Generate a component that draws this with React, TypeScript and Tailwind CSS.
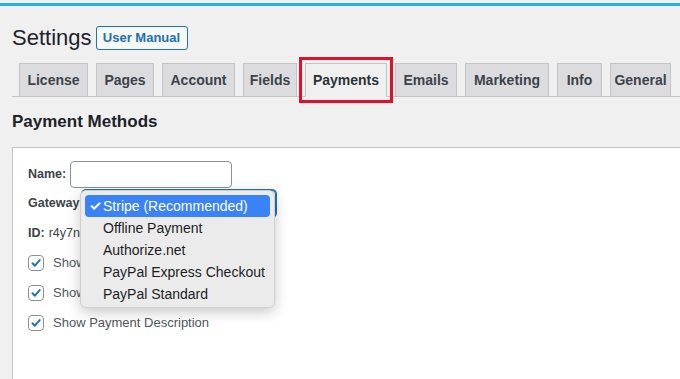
import React from 'react';

const tabs = [
    { label: 'License', w: 'w-[69px]' },
    { label: 'Pages', w: 'w-[58px]' },
    { label: 'Account', w: 'w-[73px]' },
    { label: 'Fields', w: 'w-[54px]' },
    { label: 'Payments', w: 'w-[82px]', active: true },
    { label: 'Emails', w: 'w-[62px]' },
    { label: 'Marketing', w: 'w-[84px]' },
    { label: 'Info', w: 'w-[45px]' },
    { label: 'General', w: 'w-[61px]' },
];

const gateways = ['Stripe (Recommended)', 'Offline Payment', 'Authorize.net', 'PayPal Express Checkout', 'PayPal Standard'];

const Checkbox: React.FC<{ label: string }> = ({ label }) => (
    <div className="flex items-center h-4 mt-[14px]">
        <span className="w-4 h-4 rounded-[4px] border border-[#8c8f94] bg-white flex items-center justify-center">
            <svg width="12" height="12" viewBox="0 0 12 12" fill="none" stroke="#2271b1" strokeWidth="2" strokeLinecap="round" strokeLinejoin="round">
                <path d="M2.5 6.2l2.4 2.5 4.8-5.6" />
            </svg>
        </span>
        <span className="ml-[9px] text-[13px] text-[#50575e] whitespace-nowrap">{label}</span>
    </div>
);

const App: React.FC = () => {
    return (
        <div className="w-[680px] h-[379px] overflow-hidden bg-[#f0f0f1] flex flex-col font-['Liberation_Sans','Inter',sans-serif] text-[#1d2327]">
            <div className="pt-[3px]">
                <div className="h-[3px] bg-[#22b5e0]" />
            </div>

            {/* heading */}
            <div className="mt-[17px] h-[30px] px-3 flex items-center">
                <h1 className="text-[22px] leading-[30px] font-normal whitespace-nowrap">Settings</h1>
                <button className="ml-[4px] h-6 w-[92px] rounded-[3px] border border-[#2271b1] bg-[#f6f7f7] text-[13px] font-bold text-[#2271b1]">
                    User Manual
                </button>
            </div>

            {/* tabs */}
            <div className="mt-[10px] ml-3 pl-[7px] flex items-end border-b border-[#c3c4c7]">
                {tabs.map((t, i) => (
                    <div
                        key={t.label}
                        className={
                            (i > 0 ? 'ml-2 ' : '') +
                            t.w +
                            ' h-[34px] -mb-px flex items-center justify-center border text-[14px] font-bold whitespace-nowrap ' +
                            (t.active
                                ? 'bg-[#f0f0f1] border-[#c3c4c7] border-b-[#f0f0f1] text-[#2c3338] outline-[3px] outline-solid outline-[#e0102a] outline-offset-[3px]'
                                : 'bg-[#dcdcde] border-[#c3c4c7] text-[#3c434a]')
                        }
                    >
                        {t.label}
                    </div>
                ))}
            </div>

            <h2 className="mt-[13px] ml-3 text-[17px] leading-6 font-bold">Payment Methods</h2>

            {/* panel */}
            <div className="mt-[13px] ml-3 flex-1 bg-white border-l border-t border-[#c3c4c7] pl-[15px] pt-[13px]">
                <div className="flex items-center h-[27px]">
                    <span className="w-[42px] text-[12.5px] font-bold text-[#3c434a]">Name:</span>
                    <span className="w-[162px] h-[27px] rounded-[4px] border border-[#8c8f94] bg-white" />
                </div>

                <div className="flex items-center h-[27px] mt-[2px]">
                    <span className="w-[54px] text-[12.5px] font-bold text-[#3c434a] whitespace-nowrap">Gateway</span>
                    <div className="relative w-[194px] h-[27px] rounded-[4px] border border-[#2271b1] shadow-[0_0_0_1px_#2271b1] bg-white">
                        <div className="absolute -left-[3px] -top-[1px] w-[195px] h-[118px] rounded-[6px] border border-[#cfcfcf] bg-[#ebebeb] shadow-[0_4px_14px_rgba(0,0,0,0.22)] pt-[4px] px-[4px] z-10">
                            {gateways.map((g, i) => (
                                <div
                                    key={g}
                                    className={
                                        'relative h-[22px] pl-[18px] flex items-center text-[14px] rounded-[4px] whitespace-nowrap ' +
                                        (i === 0 ? 'bg-[#3a82f7] text-white' : 'text-[#1d1d1f]')
                                    }
                                >
                                    {i === 0 && <span className="absolute left-[4px] text-[14px] font-bold">✓</span>}
                                    {g}
                                </div>
                            ))}
                        </div>
                    </div>
                </div>

                <div className="mt-[7px] h-[18px] flex items-center text-[12.5px] text-[#3c434a]">
                    <span className="font-bold">ID:</span>
                    <span className="ml-1">r4y7n2kq</span>
                </div>

                <div className="mt-[-1px]">
                    <Checkbox label="Show Payment Icons" />
                    <Checkbox label="Show Payment Title" />
                    <Checkbox label="Show Payment Description" />
                </div>
            </div>
        </div>
    );
};

export default App;
